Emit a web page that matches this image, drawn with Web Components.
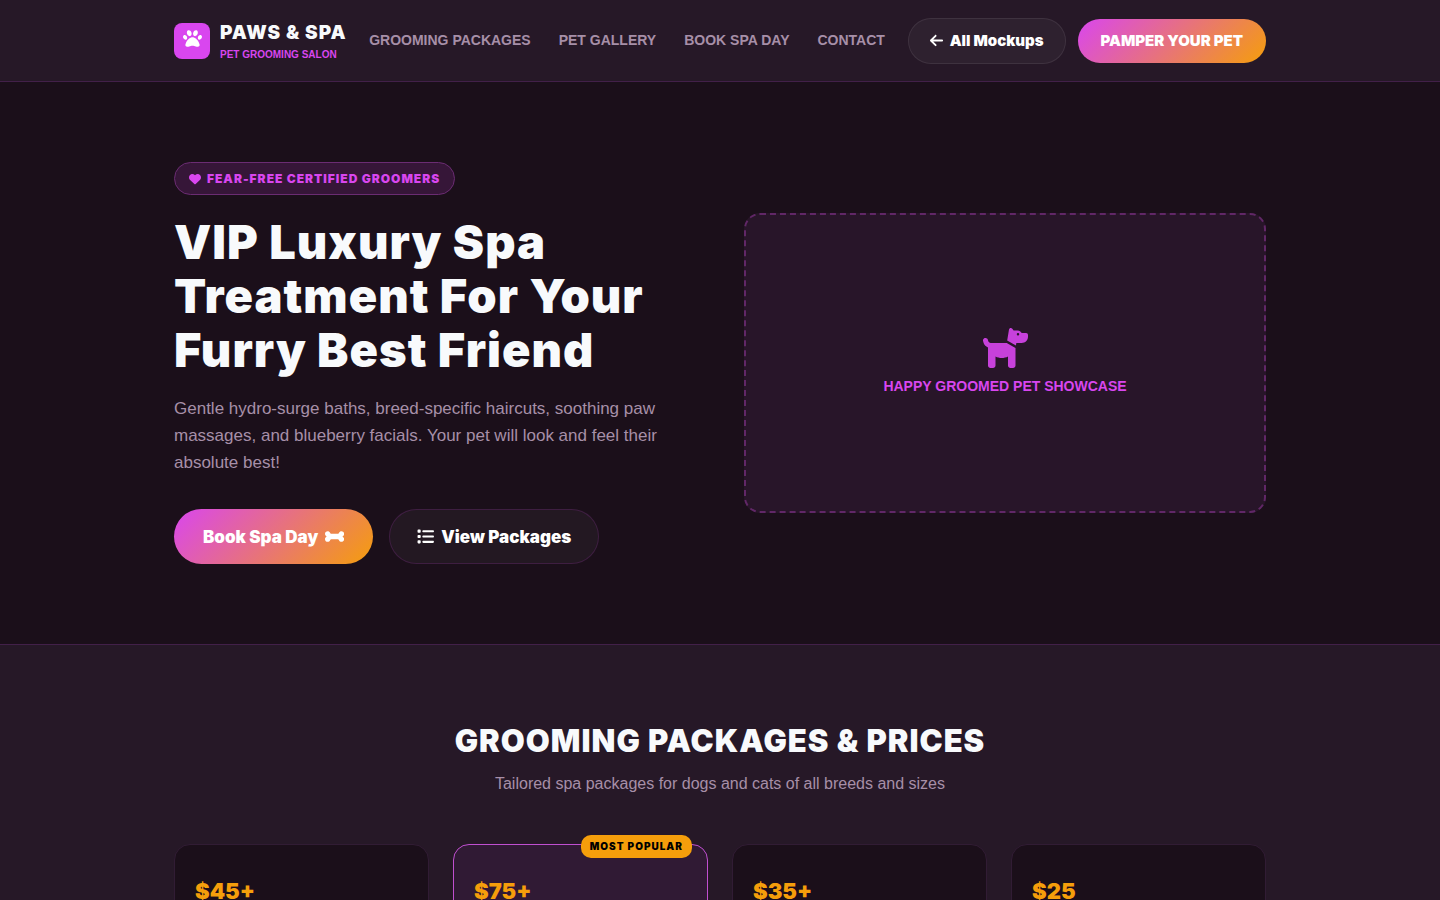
<!DOCTYPE html>
<html lang="en">
<head>
<meta charset="utf-8">
<meta name="viewport" content="width=device-width, initial-scale=1">
<title>Paws &amp; Spa</title>
<style>
  :root {
    --bg: #1b0f1a;
    --surface: #261827;
    --accent: #d946ef;
    --amber: #f59e0b;
    --text: #f8fafc;
    --muted: #a78fa8;
    --line: #422049;
    --display: Inter, "Liberation Sans", sans-serif;
  }
  body { margin: 0; background: var(--bg); color: var(--text); font: 16px/24px "Liberation Sans", Arial, sans-serif; overflow-x: hidden; }
</style>
</head>
<body>
<pet-page></pet-page>
<script>
const ICONS = {
  paw: [512, "M226.5 92.9c14.3 42.9-.3 86.2-32.6 96.8s-70.1-15.6-84.4-58.5s.3-86.2 32.6-96.8s70.1 15.6 84.4 58.5zM100.4 198.6c18.9 32.4 14.3 70.1-10.2 84.1s-59.7-.9-78.5-33.3S-2.7 179.3 21.8 165.3s59.7 .9 78.5 33.3zM69.2 401.2C121.6 259.9 214.7 224 256 224s134.4 35.9 186.8 177.2c3.6 9.7 5.2 20.1 5.2 30.5v1.6c0 25.8-20.9 46.7-46.7 46.7c-11.5 0-22.9-1.4-34-4.2l-88-22c-15.3-3.8-31.3-3.8-46.6 0l-88 22c-11.1 2.8-22.5 4.2-34 4.2C84.9 480 64 459.1 64 433.3v-1.6c0-10.4 1.6-20.8 5.2-30.5zM421.8 282.7c-24.5-14-29.1-51.7-10.2-84.1s54-47.3 78.5-33.3s29.1 51.7 10.2 84.1s-54 47.3-78.5 33.3zM310.1 189.7c-32.3-10.6-46.9-53.9-32.6-96.8s52.1-69.1 84.4-58.5s46.9 53.9 32.6 96.8s-52.1 69.1-84.4 58.5z"],
  back: [448, "M9.4 233.4c-12.5 12.5-12.5 32.8 0 45.3l160 160c12.5 12.5 32.8 12.5 45.3 0s12.5-32.8 0-45.3L109.2 288 416 288c17.7 0 32-14.3 32-32s-14.3-32-32-32l-306.7 0L214.6 118.6c12.5-12.5 12.5-32.8 0-45.3s-32.8-12.5-45.3 0l-160 160z"],
  heart: [512, "M47.6 300.4L228.3 469.1c7.5 7 17.4 10.9 27.7 10.9s20.2-3.9 27.7-10.9L464.4 300.4c30.4-28.3 47.6-68 47.6-109.5v-5.8c0-69.9-50.5-129.5-119.4-141C347 36.5 300.6 51.4 268 84L256 96 244 84c-32.6-32.6-79-47.5-124.6-39.9C50.5 55.6 0 115.2 0 185.1v5.8c0 41.5 17.2 81.2 47.6 109.5z"],
  bone: [576, "M153.7 144.8c6.9 16.3 20.6 31.2 38.3 31.2H384c17.7 0 31.4-14.9 38.3-31.2C434.4 116.1 462.9 96 496 96c44.2 0 80 35.8 80 80c0 30.4-17 56.9-42 70.4c-3.6 1.9-6 5.5-6 9.6s2.4 7.7 6 9.6c25 13.5 42 40 42 70.4c0 44.2-35.8 80-80 80c-33.1 0-61.6-20.1-73.7-48.8C415.4 350.9 401.7 336 384 336H192c-17.7 0-31.4 14.9-38.3 31.2C141.6 395.9 113.1 416 80 416c-44.2 0-80-35.8-80-80c0-30.4 17-56.9 42-70.4c3.6-1.9 6-5.5 6-9.6s-2.4-7.7-6-9.6C17 232.9 0 206.4 0 176c0-44.2 35.8-80 80-80c33.1 0 61.6 20.1 73.7 48.8z"],
  list: [512, "M40 48C26.7 48 16 58.7 16 72v48c0 13.3 10.7 24 24 24H88c13.3 0 24-10.7 24-24V72c0-13.3-10.7-24-24-24H40zM192 64c-17.7 0-32 14.3-32 32s14.3 32 32 32H480c17.7 0 32-14.3 32-32s-14.3-32-32-32H192zm0 160c-17.7 0-32 14.3-32 32s14.3 32 32 32H480c17.7 0 32-14.3 32-32s-14.3-32-32-32H192zm0 160c-17.7 0-32 14.3-32 32s14.3 32 32 32H480c17.7 0 32-14.3 32-32s-14.3-32-32-32H192zM16 232v48c0 13.3 10.7 24 24 24H88c13.3 0 24-10.7 24-24V232c0-13.3-10.7-24-24-24H40c-13.3 0-24 10.7-24 24zM40 368c-13.3 0-24 10.7-24 24v48c0 13.3 10.7 24 24 24H88c13.3 0 24-10.7 24-24V392c0-13.3-10.7-24-24-24H40z"],
  dog: [576, "M309.6 158.5L332.7 19.8C334.6 8.4 344.5 0 356.1 0c7.5 0 14.5 3.5 19 9.5L392 32h52.1c12.7 0 24.9 5.1 33.9 14.1L496 64h56c13.3 0 24 10.7 24 24v24c0 44.2-35.8 80-80 80H464 448 426.7l-5.1 30.5-112-64zM416 256.1L416 480c0 17.7-14.3 32-32 32H352c-17.7 0-32-14.3-32-32V364.8c-24 12.3-51.2 19.2-80 19.2s-56-6.9-80-19.2V480c0 17.7-14.3 32-32 32H96c-17.7 0-32-14.3-32-32V249.8c-28.8-10.9-51.4-35.3-59.2-66.5L1 167.8c-4.3-17.1 6.1-34.5 23.3-38.8s34.5 6.1 38.8 23.3l3.9 15.5C70.5 182 83.3 192 98 192h30 16H303.8L416 256.1zM464 80a16 16 0 1 0 -32 0 16 16 0 1 0 32 0z"]
};

function define(name, html) {
  customElements.define(name, class extends HTMLElement {
    constructor() {
      super();
      this.attachShadow({ mode: "open" }).innerHTML = typeof html === "function" ? html(this) : html;
    }
  });
}

define("pet-icon", el => {
  const [w, d] = ICONS[el.getAttribute("name")];
  return `<style>
    :host { display: inline-flex; flex: none; }
    svg { display: block; height: 1em; fill: currentColor; }
  </style><svg viewBox="0 0 ${w} 512" aria-hidden="true"><path d="${d}"/></svg>`;
});

define("pet-button", el => `<style>
  :host { display: block; flex: none; }
  a { display: flex; align-items: center; justify-content: center; gap: 7px; box-sizing: border-box;
      height: 46px; padding: 0 21px; border: 1px solid #ffffff14; border-radius: 50px;
      background: #ffffff0a; color: #fff; text-decoration: none; white-space: nowrap;
      font: 900 15px/20px var(--display); }
  :host([primary]) a { height: 44px; padding: 0 23px; border: 0; background: linear-gradient(135deg, var(--accent), var(--amber)); }
  :host([large]) a { height: 55px; padding: 0 27px; font-size: 17px; border-color: #d946ef26; }
  :host([large][primary]) a { padding: 0 29px; }
</style><a href="${el.getAttribute("href")}"><slot></slot></a>`);

define("pet-brand", `<style>
  :host { display: flex; align-items: center; gap: 10px; flex: none; }
  .mark { display: grid; place-items: center; box-sizing: border-box; width: 36px; height: 36px; padding-bottom: 4px;
          border-radius: 8px; background: var(--accent); color: #fff; font-size: 19px; }
  .name { font: 900 19px/26px var(--display); letter-spacing: 1px; color: var(--text); }
  .tag { font-size: 10px; line-height: 14px; font-weight: 700; color: var(--accent); margin-top: 2px; }
</style>
<div class="mark"><pet-icon name="paw"></pet-icon></div>
<div><div class="name">PAWS &amp; SPA</div><div class="tag">PET GROOMING SALON</div></div>`);

define("pet-header", `<style>
  :host { display: block; background: #261827; border-bottom: 1px solid var(--line); }
  .bar { display: flex; align-items: center; justify-content: space-between; box-sizing: border-box;
         max-width: 1140px; min-height: 81px; margin: 0 auto; padding: 0 24px; }
  nav { display: flex; gap: 28px; }
  nav a { color: var(--muted); font-size: 14px; line-height: 20px; padding-bottom: 2px; font-weight: 700; text-decoration: none; white-space: nowrap; }
  .actions { display: flex; align-items: center; gap: 12px; }
</style>
<header class="bar">
  <pet-brand></pet-brand>
  <nav><a href="#packages">GROOMING PACKAGES</a><a href="#gallery">PET GALLERY</a><a href="#book">BOOK SPA DAY</a><a href="#contact">CONTACT</a></nav>
  <div class="actions">
    <pet-button href="#mockups"><pet-icon name="back"></pet-icon>All Mockups</pet-button>
    <pet-button primary href="#book">PAMPER YOUR PET</pet-button>
  </div>
</header>`);

define("pet-showcase", `<style>
  :host { display: flex; flex-direction: column; align-items: center; justify-content: center; gap: 8px;
          box-sizing: border-box; height: 300px; padding-bottom: 2px; border: 2px dashed #612767; border-radius: 16px;
          background: #281529; color: var(--accent); font-size: 14px; line-height: 20px; font-weight: 700; }
  pet-icon { font-size: 40px; opacity: 0.9; }
</style><pet-icon name="dog"></pet-icon><slot></slot>`);

define("pet-hero", `<style>
  :host { display: block; border-bottom: 1px solid var(--line); }
  .grid { display: grid; grid-template-columns: 1fr 1fr; gap: 48px; align-items: center; box-sizing: border-box;
          max-width: 1140px; margin: 0 auto; padding: 80px 24px; }
  .badge { display: inline-flex; align-items: center; gap: 6px; box-sizing: border-box; height: 33px; padding: 0 14px;
           border: 1px solid #6b2c73; border-radius: 50px; background: #361638; color: var(--accent);
           font: 900 12px/20px var(--display); letter-spacing: 1px; vertical-align: top; white-space: nowrap; }
  h1 { margin: 20px 0 18px; font: 900 47px/54px var(--display); letter-spacing: 1px; color: var(--text); }
  p { margin: 0 0 33px; font-size: 17px; line-height: 27px; color: var(--muted); }
  .actions { display: flex; gap: 16px; }
</style>
<section class="grid">
  <div>
    <span class="badge"><pet-icon name="heart"></pet-icon>FEAR-FREE CERTIFIED GROOMERS</span>
    <h1>VIP Luxury Spa Treatment For Your Furry Best Friend</h1>
    <p>Gentle hydro-surge baths, breed-specific haircuts, soothing paw massages, and blueberry facials. Your pet will look and feel their absolute best!</p>
    <div class="actions">
      <pet-button large primary href="#book">Book Spa Day <pet-icon name="bone"></pet-icon></pet-button>
      <pet-button large href="#packages"><pet-icon name="list"></pet-icon>View Packages</pet-button>
    </div>
  </div>
  <pet-showcase>HAPPY GROOMED PET SHOWCASE</pet-showcase>
</section>`);

define("pet-price", `<style>
  :host { display: block; position: relative; box-sizing: border-box; min-height: 240px; padding: 32px 20px;
          border: 1px solid #311c34; border-radius: 16px; background: var(--bg);
          color: var(--amber); font: 900 22px/28px var(--display); }
  :host([popular]) { border-color: #c04fd0; background: #301a34; }
  .flag { display: none; position: absolute; top: -10px; right: 15px; padding: 0 9px; border-radius: 10px;
          background: var(--amber); color: #000; font: 900 10px/23px var(--display); letter-spacing: 1px; }
  :host([popular]) .flag { display: block; }
</style><span class="flag"><slot name="flag"></slot></span><slot></slot>`);

define("pet-packages", `<style>
  :host { display: block; background: var(--surface); }
  section { box-sizing: border-box; max-width: 1140px; margin: 0 auto; padding: 80px 24px; text-align: center; }
  h2 { margin: 0; font: 900 31px/32px var(--display); letter-spacing: 1px; }
  p { margin: 15px 0 48px; color: var(--muted); }
  .cards { display: grid; grid-template-columns: repeat(4, 1fr); gap: 24px; text-align: left; }
</style>
<section id="packages">
  <h2>GROOMING PACKAGES &amp; PRICES</h2>
  <p>Tailored spa packages for dogs and cats of all breeds and sizes</p>
  <div class="cards">
    <pet-price>$45+</pet-price>
    <pet-price popular><span slot="flag">MOST POPULAR</span>$75+</pet-price>
    <pet-price>$35+</pet-price>
    <pet-price>$25</pet-price>
  </div>
</section>`);

define("pet-page", `<style>:host { display: block; }</style>
<pet-header></pet-header>
<main><pet-hero></pet-hero><pet-packages></pet-packages></main>`);
</script>
</body>
</html>
